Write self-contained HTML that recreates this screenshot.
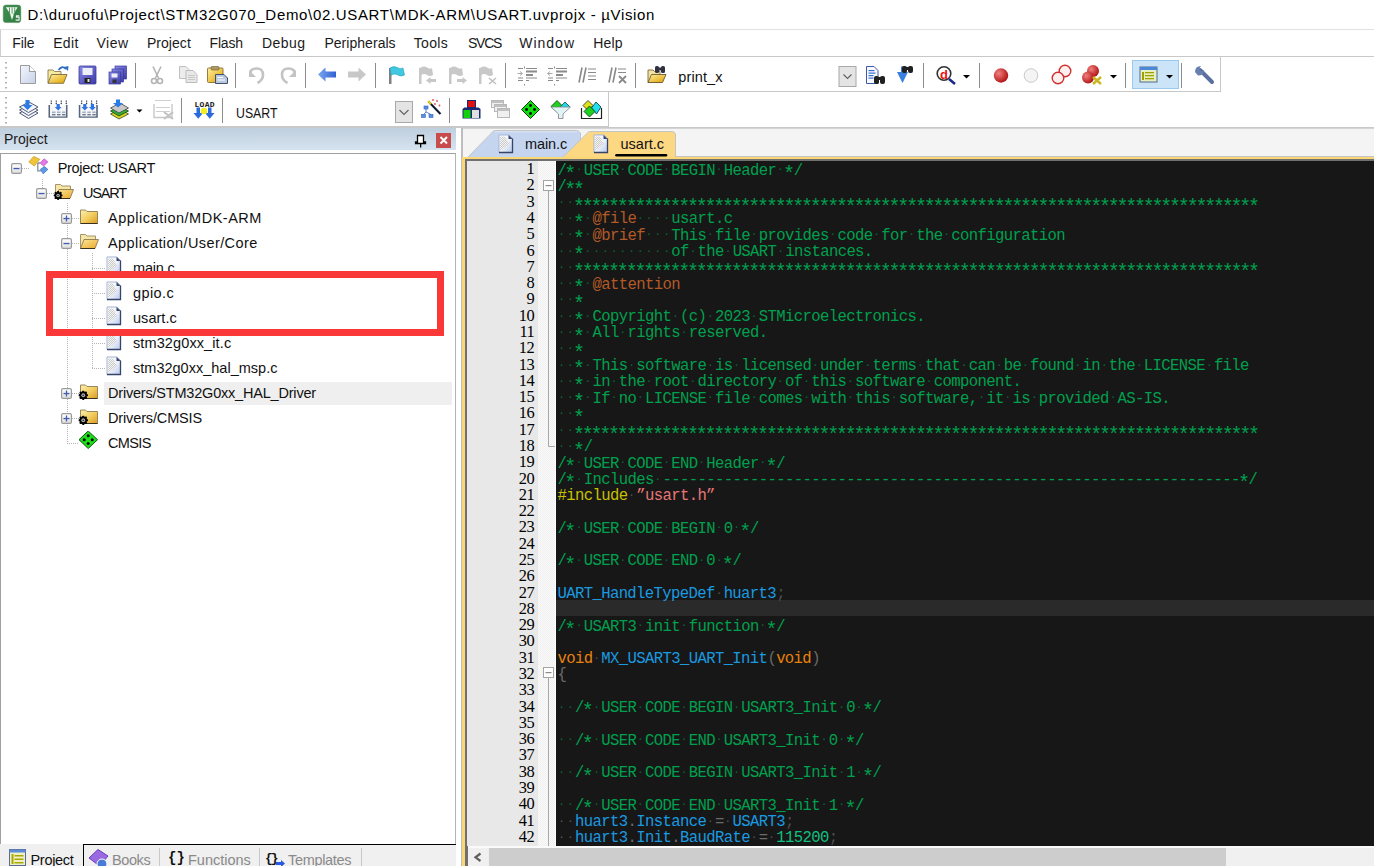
<!DOCTYPE html>
<html><head><meta charset="utf-8"><title>uVision</title>
<style>
html,body{margin:0;padding:0;}
body{width:1374px;height:866px;overflow:hidden;position:relative;background:#fff;font-family:"Liberation Sans",sans-serif;color:#000;}
.a{position:absolute;}
#title{left:27.5px;top:4.5px;font-size:15px;letter-spacing:0.67px;white-space:nowrap;line-height:20px;}
#menu{left:0;top:29px;width:1374px;height:27px;border-top:1px solid #e2e2e2;border-left:1px solid #d0d0d0;}
#menu span{position:absolute;top:4px;font-size:14px;line-height:18px;color:#1a1a1a;}
.hl{left:0;width:1374px;height:1px;background:#c8c8c8;}
.tb{left:0;border-right:1px solid #c8c8c8;border-bottom:1px solid #c8c8c8;background:#fff;}
.grip{left:5px;width:2px;border-left:2px dotted #b8b8b8;}
.sep{width:1px;background:#8a8a8a;}
#ptitle{left:0;top:128px;width:456px;height:22px;background:linear-gradient(#c0cfdd,#d5e3f1);}
#ptitle .t{left:4px;top:2px;font-size:14px;line-height:18px;color:#1a1a1a;}
#pclose{left:436px;top:133px;width:15px;height:15px;background:#c94c4c;}
#pbox{left:0;top:153px;width:454px;height:690px;border:1px solid #a0a0a0;border-bottom:1px solid #000;border-right:1px solid #b4b4b4;background:#fff;}
#ptabs{left:0;top:844px;width:456px;height:22px;background:#f0f0f0;}
#tabstrip{left:463px;top:128px;width:911px;height:29px;background:#f4f4f4;}
#vline{left:461px;top:128px;width:2px;height:738px;background:#bdbdbd;}
#yframe{left:462px;top:157px;width:912px;height:709px;background:#fbd675;}
#dframe{left:465px;top:159px;width:909px;height:707px;background:#707070;}
#gutter{left:467px;top:161px;width:71px;height:685px;background:#e8e8e8;}
#fold{left:538px;top:161px;width:18px;height:685px;background-color:#fbfbfb;background-image:linear-gradient(45deg,#efefef 25%,transparent 25%,transparent 75%,#efefef 75%),linear-gradient(45deg,#efefef 25%,transparent 25%,transparent 75%,#efefef 75%);background-size:2px 2px;background-position:0 0,1px 1px;}
#code{left:556px;top:161px;width:818px;height:685px;background:#171717;overflow:hidden;}
#curline{left:0;top:438.7px;width:818px;height:16.2px;background:#2a2a2a;}
.ln{position:absolute;left:1.4px;height:16.24px;line-height:16.24px;font-family:"Liberation Mono",monospace;font-size:15.6px;letter-spacing:-0.61px;white-space:pre;}
.nm_{position:absolute;right:4px;height:16.24px;line-height:16.24px;font-family:"Liberation Serif",serif;font-size:16.4px;letter-spacing:-0.6px;color:#000;text-align:right;width:60px;}
.cm{color:#00a04e;}
.dg{color:#0a6a36;font-size:11px;letter-spacing:2.15px;line-height:0;position:relative;left:0.8px;top:-2.5px;}
.dd{color:#555;font-size:11px;letter-spacing:2.15px;line-height:0;position:relative;left:0.8px;top:-2.5px;}
.tg{color:#b45a28;}
.pp{color:#c8c000;}
.st{color:#e87676;}
.id{color:#1a9ae0;}
.kw{color:#e8820c;}
.op{color:#6a6a6a;}
.nm{color:#10c080;}
#hscroll{left:467.5px;top:846px;width:907px;height:18px;background:#f0f0f0;border-top:2px solid #fafafa;}
#hthumb{left:21.5px;top:0;width:736.8px;height:18px;background:#cdcdcd;}
.vd{width:1px;background-image:linear-gradient(#b4b4b4 50%,transparent 50%);background-size:1px 2px;}
.hd{height:1px;background-image:linear-gradient(90deg,#b4b4b4 50%,transparent 50%);background-size:2px 1px;}
.tt{font-size:14.5px;line-height:20px;white-space:nowrap;color:#111;}
.ast{font-size:20px;letter-spacing:-3.25px;position:relative;top:5.4px;left:-1.9px;margin-right:0;line-height:0;}
#foldmk{left:538px;top:161px;}
.sc{color:#4e4e4e;}

</style></head>
<body>
<svg width="0" height="0" style="position:absolute">
<defs>
<linearGradient id="gExp" x1="0" y1="0" x2="0" y2="1"><stop offset="0" stop-color="#ffffff"/><stop offset="1" stop-color="#dedede"/></linearGradient>
<linearGradient id="gFold" x1="0" y1="0" x2="1" y2="1"><stop offset="0" stop-color="#fbeeb0"/><stop offset="0.5" stop-color="#f3cf62"/><stop offset="1" stop-color="#d99a22"/></linearGradient>
<linearGradient id="gFoldF" x1="0" y1="0" x2="1" y2="1"><stop offset="0" stop-color="#fde79a"/><stop offset="1" stop-color="#e8a828"/></linearGradient>
<linearGradient id="gFile" x1="0" y1="0" x2="1" y2="1"><stop offset="0" stop-color="#ffffff"/><stop offset="0.5" stop-color="#f0f3fa"/><stop offset="1" stop-color="#b8c8ec"/></linearGradient>
<pattern id="pChk" width="2" height="2" patternUnits="userSpaceOnUse"><rect width="2" height="2" fill="#f4f4f4"/><rect width="1" height="1" fill="#cacaca"/><rect x="1" y="1" width="1" height="1" fill="#cacaca"/></pattern>
<symbol id="exm" viewBox="0 0 11 11"><rect x="0.6" y="0.6" width="9.8" height="9.8" rx="1.5" fill="url(#gExp)" stroke="#9a9a9a" stroke-width="1.2"/><rect x="2.5" y="4.9" width="6" height="1.3" fill="#3f5db0"/></symbol>
<symbol id="exp" viewBox="0 0 11 11"><rect x="0.6" y="0.6" width="9.8" height="9.8" rx="1.5" fill="url(#gExp)" stroke="#9a9a9a" stroke-width="1.2"/><rect x="2.5" y="4.9" width="6" height="1.3" fill="#3f5db0"/><rect x="4.85" y="2.5" width="1.3" height="6" fill="#3f5db0"/></symbol>
<symbol id="proj" viewBox="0 0 22 22"><path d="M9.8,7 L9.8,14.9 L12.9,14.9 M9.8,7 L12,7" fill="none" stroke="#7d8fa8" stroke-width="1.3"/><path d="M0.8,5.9 L5.7,0.4 L11.8,3.3 L6.3,10 Z" fill="#efc43a" stroke="#c89818" stroke-width="0.7"/><path d="M12.1,7.1 L16.1,2.8 L19.9,5.9 L15.5,10 Z" fill="#e878e8" stroke="#b84cb8" stroke-width="0.7"/><path d="M12.3,13.4 L16.4,10.6 L19.9,13.4 L15.2,17.8 Z" fill="#5a9ae6" stroke="#3a70c0" stroke-width="0.7"/></symbol>
<symbol id="fclosed" viewBox="0 0 22 22"><path d="M2.5,4 L7.5,4 L9,5.5 L19.5,5.5 L19.5,17.5 L2.5,17.5 Z" fill="url(#gFold)" stroke="#8f7a50" stroke-width="0.9"/><path d="M2.5,17.5 L19.5,17.5" stroke="#3a3020" stroke-width="1"/></symbol>
<symbol id="fopen" viewBox="0 0 22 22"><path d="M2.5,3.5 L7.5,3.5 L9,5 L17.5,5 L17.5,8 L2.5,17.5 Z" fill="#f6e6a6" stroke="#9a8a60" stroke-width="0.9"/><path d="M2.5,17.5 L6,8.5 L20.5,8.5 L17,17.5 Z" fill="url(#gFoldF)" stroke="#8f7a50" stroke-width="0.9"/><path d="M2.5,17.5 L17,17.5" stroke="#3a3020" stroke-width="1"/></symbol>
<symbol id="gear" viewBox="0 0 10 10"><g fill="#000"><circle cx="5" cy="5" r="3.6"/><circle cx="5" cy="1.2" r="1.3"/><circle cx="5" cy="8.8" r="1.3"/><circle cx="1.2" cy="5" r="1.3"/><circle cx="8.8" cy="5" r="1.3"/><circle cx="2.3" cy="2.3" r="1.3"/><circle cx="7.7" cy="2.3" r="1.3"/><circle cx="2.3" cy="7.7" r="1.3"/><circle cx="7.7" cy="7.7" r="1.3"/></g><circle cx="5" cy="5" r="2" fill="#b0b0b0"/><circle cx="5" cy="5" r="0.9" fill="#333"/></symbol>
<symbol id="fopen_g" viewBox="0 0 22 22"><use href="#fopen"/><svg x="0.6" y="9.8" width="9" height="9.3" viewBox="0 0 10 10"><use href="#gear"/></svg></symbol>
<symbol id="fclosed_g" viewBox="0 0 22 22"><use href="#fclosed"/><svg x="0.5" y="9.5" width="9.5" height="9.5" viewBox="0 0 10 10"><use href="#gear"/></svg></symbol>
<symbol id="file" viewBox="0 0 22 22"><path d="M2,1 L12,1 L15.5,4.5 L15.5,18.5 L2,18.5 Z" fill="url(#gFile)" stroke="#a4b4d4" stroke-width="1"/><path d="M3.2,2.5 L8,2.5 L11.8,9.8 L3.2,17.2 Z" fill="url(#pChk)"/><path d="M15.5,4.5 L15.5,18.5 L2,18.5" fill="none" stroke="#34446a" stroke-width="1.3"/><path d="M11.5,1 L11.5,5 L15.5,5 Z" fill="#34446a"/></symbol>
<symbol id="diamond" viewBox="0 0 22 22"><path d="M10.2,0 L19.5,8.7 L10.2,17.5 L1,8.7 Z" fill="#19e019" stroke="#0a5a0a" stroke-width="1"/><g fill="#000"><circle cx="10.2" cy="4.8" r="1.5"/><circle cx="10.2" cy="12.6" r="1.5"/><circle cx="6.2" cy="8.7" r="1.5"/><circle cx="14.2" cy="8.7" r="1.5"/></g></symbol>
</defs>
</svg>

<div class="a" id="title">D:\duruofu\Project\STM32G070_Demo\02.USART\MDK-ARM\USART.uvprojx - µVision</div>
<svg class="a" style="left:2px;top:4px" width="21" height="21" viewBox="2 4 21 21">
<defs><linearGradient id="gV5" x1="0" y1="0" x2="1" y2="1"><stop offset="0" stop-color="#3f8f4f"/><stop offset="1" stop-color="#2f7a40"/></linearGradient></defs>
<rect x="3.2" y="5" width="17.6" height="17.6" rx="2.8" fill="url(#gV5)" stroke="#5a8a64" stroke-width="0.5"/>
<path d="M5.8,7.2 L17.6,7.2 L12,16.5 Z" fill="#f2f7f2"/>
<g fill="#5a9a68"><rect x="9" y="7.6" width="1" height="6"/><rect x="11.6" y="7.6" width="1" height="6"/><rect x="14.2" y="7.6" width="1" height="5"/></g>
<path d="M10.2,14.5 L13.8,14.5 L12,20 Z" fill="#f2f7f2"/>
<path d="M19.3,15.2 L16,15.2 L15.8,17.8 L18.6,17.8 L18.6,19.5 L15.6,19.5 L15.6,20.8 L19.6,20.8 L19.6,16.6 L17.2,16.6 L17.3,16.2 L19.3,16.2 Z" fill="#f2f7f2"/>
</svg>
<div class="a" id="menu">
<span style="left:11.2px;letter-spacing:-0.11px">File</span><span style="left:52.2px;letter-spacing:0.32px">Edit</span><span style="left:95.5px;letter-spacing:0.50px">View</span><span style="left:145.9px;letter-spacing:0.06px">Project</span><span style="left:208.5px;letter-spacing:-0.15px">Flash</span><span style="left:260.9px;letter-spacing:0.49px">Debug</span><span style="left:323.4px;letter-spacing:0.04px">Peripherals</span><span style="left:412.8px;letter-spacing:0.32px">Tools</span><span style="left:467.1px;letter-spacing:-1.31px">SVCS</span><span style="left:518.3px;letter-spacing:0.98px">Window</span><span style="left:592.2px;letter-spacing:0.20px">Help</span>
</div>
<div class="a hl" style="top:56px;height:1px;"></div>
<div class="a tb" style="top:57px;width:1220px;height:34px;"></div>
<div class="a tb" style="top:92px;width:608px;height:34px;"></div>
<div class="a hl" style="top:127px;"></div>
<svg class="a" style="left:0;top:0" width="1374" height="130" viewBox="0 0 1374 130">
<defs>
<linearGradient id="tgDoc" x1="0" y1="0" x2="1" y2="1"><stop offset="0" stop-color="#f4f6fc"/><stop offset="1" stop-color="#c6d2ea"/></linearGradient>
<linearGradient id="tgFlop" x1="0" y1="0" x2="1" y2="1"><stop offset="0" stop-color="#8a8ae8"/><stop offset="1" stop-color="#3a3aa8"/></linearGradient>
<linearGradient id="tgGold" x1="0" y1="0" x2="1" y2="1"><stop offset="0" stop-color="#fff0a0"/><stop offset="1" stop-color="#e0a000"/></linearGradient>
<linearGradient id="tgBlueArr" x1="0" y1="0" x2="1" y2="0"><stop offset="0" stop-color="#7aa8f0"/><stop offset="1" stop-color="#3060d0"/></linearGradient>
<linearGradient id="tgGray" x1="0" y1="0" x2="0" y2="1"><stop offset="0" stop-color="#e2e2e2"/><stop offset="1" stop-color="#bdbdbd"/></linearGradient>
</defs>
<!-- grips -->
<g fill="#b0b0b0"><rect x="5" y="62" width="2" height="1.5"/><rect x="5" y="67" width="2" height="1.5"/><rect x="5" y="72" width="2" height="1.5"/><rect x="5" y="77" width="2" height="1.5"/><rect x="5" y="82" width="2" height="1.5"/><rect x="5" y="87" width="2" height="1.5"/>
<rect x="5" y="97" width="2" height="1.5"/><rect x="5" y="102" width="2" height="1.5"/><rect x="5" y="107" width="2" height="1.5"/><rect x="5" y="112" width="2" height="1.5"/><rect x="5" y="117" width="2" height="1.5"/><rect x="5" y="122" width="2" height="1.5"/></g>
<!-- separators tb1 -->
<g fill="#8c8c8c"><rect x="135" y="63" width="1" height="25"/><rect x="235" y="63" width="1" height="25"/><rect x="305" y="63" width="1" height="25"/><rect x="375" y="63" width="1" height="25"/><rect x="505" y="63" width="1" height="25"/><rect x="635" y="63" width="1" height="25"/><rect x="923" y="63" width="1" height="25"/><rect x="979" y="63" width="1" height="25"/><rect x="1125" y="63" width="1" height="25"/><rect x="1181" y="63" width="1" height="25"/></g>
<!-- new -->
<path d="M20.5,65.5 L29.5,65.5 L35.5,71.5 L35.5,83.5 L20.5,83.5 Z" fill="url(#tgDoc)" stroke="#9c9c9c"/>
<path d="M29.5,65.5 L29.5,71.5 L35.5,71.5" fill="#fff" stroke="#9c9c9c"/>
<!-- open -->
<path d="M48,70 L53,70 L54.5,71.5 L61,71.5 L61,74 L48,83 Z" fill="#f7e9a0" stroke="#8a7a50" stroke-width="0.9"/>
<path d="M48,83.3 L51.5,74.5 L67,74.5 L63.5,83.3 Z" fill="url(#tgGold)" stroke="#7a6a40" stroke-width="0.9"/>
<path d="M58.5,70 Q62,65 66,69" fill="none" stroke="#3070c0" stroke-width="1.8"/><path d="M64,67 L68,71 L68.5,66 Z" fill="#3070c0"/>
<!-- save -->
<rect x="79" y="66" width="17" height="18" rx="1" fill="url(#tgFlop)" stroke="#3a3a98" stroke-width="0.8"/>
<rect x="82.5" y="68" width="10" height="7" fill="#eceef8"/>
<rect x="84.5" y="78" width="6" height="5" fill="#222"/><rect x="87.5" y="79" width="2" height="3" fill="#ddd"/>
<!-- save all -->
<rect x="115" y="66" width="11.5" height="13" fill="url(#tgFlop)" stroke="#3a3a98" stroke-width="0.7"/>
<rect x="112" y="69" width="11.5" height="13" fill="url(#tgFlop)" stroke="#3a3a98" stroke-width="0.7"/>
<rect x="109" y="72" width="11.5" height="12" fill="url(#tgFlop)" stroke="#3a3a98" stroke-width="0.7"/>
<rect x="111.5" y="73.5" width="6" height="4" fill="#eceef8"/><rect x="112.5" y="79.5" width="4" height="3.5" fill="#333"/>
<!-- cut -->
<g fill="none" stroke="#b4b4b4" stroke-width="1.6"><path d="M153,66.5 L158.5,78"/><path d="M161,66.5 L155.5,78"/><circle cx="154" cy="81" r="2.5"/><circle cx="160" cy="81" r="2.5"/></g>
<!-- copy -->
<path d="M179.5,66.5 L186,66.5 L189,69.5 L189,78.5 L179.5,78.5 Z" fill="#ececec" stroke="#c0c0c0"/>
<path d="M186,70.5 L193,70.5 L197,74.5 L197,82.5 L186,82.5 Z" fill="#e8e8e8" stroke="#bcbcbc"/>
<g stroke="#c8c8c8"><path d="M188,75.5 H195"/><path d="M188,77.5 H195"/><path d="M188,79.5 H195"/></g>
<!-- paste -->
<rect x="207.5" y="68" width="15.5" height="14.5" rx="1" fill="url(#tgGold)" stroke="#8a7030" stroke-width="0.9"/>
<rect x="211" y="66.5" width="8" height="3.5" rx="1" fill="#b09860" stroke="#6a5a30" stroke-width="0.6"/>
<path d="M215.5,74.5 L224,74.5 L227.5,78 L227.5,83.5 L215.5,83.5 Z" fill="#b8c8e0" stroke="#40506a" stroke-width="1"/>
<g stroke="#fff"><path d="M217.5,77.5 H223"/><path d="M217.5,80 H225"/></g>
<!-- undo / redo -->
<path d="M251,75 Q249,69 256,68.5 Q263,68 263,75 Q263,80 257.5,83" fill="none" stroke="#c4c4c4" stroke-width="2.6"/>
<path d="M249,70 L249,77 L256,77 Z" fill="#c4c4c4"/>
<path d="M294,75 Q296,69 289,68.5 Q282,68 282,75 Q282,80 287.5,83" fill="none" stroke="#c4c4c4" stroke-width="2.6"/>
<path d="M296,70 L296,77 L289,77 Z" fill="#c4c4c4"/>
<!-- back / forward -->
<path d="M318,74.5 L325.5,67.5 L325.5,71.5 L336,71.5 L336,77.5 L325.5,77.5 L325.5,81.5 Z" fill="url(#tgBlueArr)"/>
<path d="M366,74.5 L358.5,67.5 L358.5,71.5 L348,71.5 L348,77.5 L358.5,77.5 L358.5,81.5 Z" fill="#c8c8c8"/>
<!-- bookmark flags -->
<rect x="389" y="68" width="2.5" height="16" fill="#808080"/>
<path d="M390,68 Q394,65.5 397,67.5 Q400,69.5 403,68 L404.5,75 Q401,77 398,75 Q395,73 391,75 Z" fill="#40c8e0" stroke="#20a0c0" stroke-width="0.6"/>
<g fill="#c8c8c8">
<rect x="419" y="68" width="2.5" height="16"/><path d="M420,68 Q424,65.5 427,67.5 Q430,69.5 432,68 L433,75 Q430,77 427,75 Q424,73 421,75 Z"/><path d="M426,80.5 L430.5,77 L430.5,79 L436,79 L436,82 L430.5,82 L430.5,84 Z"/>
<rect x="449" y="68" width="2.5" height="16"/><path d="M450,68 Q454,65.5 457,67.5 Q460,69.5 462,68 L463,75 Q460,77 457,75 Q454,73 451,75 Z"/><path d="M467,80.5 L462.5,77 L462.5,79 L457,79 L457,82 L462.5,82 L462.5,84 Z"/>
<rect x="479" y="68" width="2.5" height="16"/><path d="M480,68 Q484,65.5 487,67.5 Q490,69.5 492,68 L493,75 Q490,77 487,75 Q484,73 481,75 Z"/>
</g>
<path d="M489,78 L496,84 M496,78 L489,84" stroke="#c0c0c0" stroke-width="1.6"/>
<!-- indent / unindent -->
<g fill="#8a8a8a">
<rect x="524" y="66.5" width="1" height="2"/><rect x="524" y="84" width="1" height="1.5"/>
<rect x="518" y="68" width="5" height="1"/><rect x="526" y="68" width="11" height="1"/>
<rect x="526" y="70.5" width="11" height="2"/><rect x="526" y="74" width="7" height="2"/>
<rect x="518" y="77.5" width="5" height="1"/><rect x="526" y="77.5" width="11" height="1"/>
<rect x="518" y="80" width="5" height="1"/><rect x="526" y="80" width="3" height="1"/>
<rect x="554" y="66.5" width="1" height="2"/><rect x="554" y="84" width="1" height="1.5"/>
<rect x="548" y="68" width="5" height="1"/><rect x="556" y="68" width="11" height="1"/>
<rect x="556" y="70.5" width="11" height="2"/><rect x="556" y="74" width="7" height="2"/>
<rect x="548" y="77.5" width="5" height="1"/><rect x="556" y="77.5" width="11" height="1"/>
<rect x="548" y="80" width="5" height="1"/><rect x="556" y="80" width="3" height="1"/>
</g>
<path d="M517.5,73.5 L522,73.5 M520,71.5 L522.5,73.5 L520,75.5" stroke="#a8a8a8" fill="none"/>
<path d="M552.5,73.5 L548,73.5 M550,71.5 L547.5,73.5 L550,75.5" stroke="#a8a8a8" fill="none"/>
<!-- comment / uncomment -->
<g stroke="#8a8a8a" stroke-width="1.6"><path d="M582,67.5 L579,82.5"/><path d="M586,67.5 L583,82.5"/><path d="M612,67.5 L609,82.5"/><path d="M616,67.5 L613,82.5"/></g>
<g fill="#8a8a8a"><rect x="588" y="68.5" width="8" height="1"/><rect x="588" y="72" width="8" height="1"/><rect x="588" y="75.5" width="8" height="1"/><rect x="588" y="79" width="8" height="1"/>
<rect x="618" y="68.5" width="8" height="1"/><rect x="618" y="72" width="8" height="1"/></g>
<path d="M619,76 L626,83 M626,76 L619,83" stroke="#8a8a8a" stroke-width="1.8"/>
<!-- find in files -->
<path d="M648,70 L653,70 L654.5,71.5 L660,71.5 L660,82.5 L648,82.5 Z" fill="#f3e3a0" stroke="#7a6a40" stroke-width="0.9"/>
<path d="M648,82.5 L651.5,74.5 L666,74.5 L662.5,82.5 Z" fill="url(#tgGold)" stroke="#6a5a30" stroke-width="0.9"/>
<g fill="#303040"><rect x="655" y="66" width="4" height="7" rx="1.5"/><rect x="661" y="66" width="4" height="7" rx="1.5"/><rect x="658" y="67.5" width="4" height="3"/></g>
<!-- dropdown btn -->
<rect x="839" y="66.5" width="17" height="20" fill="#e4e4e4" stroke="#a8a8a8"/>
<path d="M843.5,74.5 L847.5,78.5 L851.5,74.5" fill="none" stroke="#606060" stroke-width="1.1"/>
<!-- find doc -->
<path d="M866.5,66.5 L874,66.5 L878,70.5 L878,83.5 L866.5,83.5 Z" fill="#f8f8ff" stroke="#3a5aa8" stroke-width="1"/>
<g fill="#3a70d0"><rect x="868.5" y="70" width="6" height="1.2"/><rect x="868.5" y="72.5" width="7" height="1.2"/><rect x="868.5" y="75" width="5" height="1.2"/><rect x="868.5" y="77.5" width="5" height="1.2"/></g>
<g fill="#202020"><rect x="874" y="76" width="5" height="8" rx="2"/><rect x="880" y="76" width="5" height="8" rx="2"/><rect x="877" y="77" width="4" height="3"/></g>
<!-- incremental find -->
<path d="M897,72 L901,72 L901,66.5 L904,66.5 L904,72 L908,72 L902.5,83 Z" fill="#3a80e0"/>
<g fill="#202020"><rect x="902" y="66" width="5" height="7" rx="2"/><rect x="908" y="66" width="5" height="7" rx="2"/><rect x="905" y="67" width="4" height="3"/></g>
<!-- debug -->
<circle cx="944" cy="73.5" r="6.8" fill="#fff" stroke="#303030" stroke-width="1.6"/>
<path d="M949,79 L955,84" stroke="#1a2a8a" stroke-width="2.6"/>
<text x="940" y="78.5" font-family="Liberation Sans" font-weight="bold" font-size="13" fill="#ee1010">d</text>
<path d="M963,75 L970,75 L966.5,78.5 Z" fill="#000"/>
<!-- breakpoints -->
<defs><radialGradient id="tgRed" cx="0.35" cy="0.35" r="0.7"><stop offset="0" stop-color="#f08080"/><stop offset="1" stop-color="#b01010"/></radialGradient></defs>
<circle cx="1001" cy="75.5" r="7.2" fill="url(#tgRed)"/>
<circle cx="1031" cy="75.5" r="6.8" fill="#f4f4f4" stroke="#c8c8c8" stroke-width="1"/>
<circle cx="1065" cy="71" r="5.8" fill="#fff0f0" stroke="#d03030" stroke-width="1.4"/>
<circle cx="1058" cy="78" r="5.8" fill="#fff0f0" stroke="#d03030" stroke-width="1.4"/>
<circle cx="1093" cy="71" r="6" fill="url(#tgRed)"/>
<circle cx="1088" cy="77.5" r="6" fill="url(#tgRed)"/>
<path d="M1093,77 L1101,84 M1101,77 L1093,84" stroke="#c8b820" stroke-width="2.4"/>
<path d="M1110,75 L1117,75 L1113.5,78.5 Z" fill="#000"/>
<!-- window highlight -->
<rect x="1132.5" y="60.5" width="46" height="28" fill="#cce4f7" stroke="#99c9ef"/>
<rect x="1140" y="67" width="17" height="15" fill="#e8f0c0" stroke="#506890"/>
<rect x="1140" y="67" width="17" height="3" fill="#4a88d8"/>
<g fill="#a0a000"><rect x="1142" y="72" width="2" height="8"/><rect x="1145" y="72" width="9" height="1.3"/><rect x="1145" y="75" width="9" height="1.3"/><rect x="1145" y="78" width="9" height="1.3"/></g>
<path d="M1166,75 L1173,75 L1169.5,78.5 Z" fill="#000"/>
<!-- wrench -->
<path d="M1200,70 L1212,82" stroke="#5a70a0" stroke-width="4" stroke-linecap="round"/>
<path d="M1195,72 Q1195,66 1201,66 L1199,69 L1201,71.5 L1204,70 Q1204,75.5 1198,75.5 Z" fill="#6880b0"/>
</svg>

<svg class="a" style="left:0;top:0" width="620" height="130" viewBox="0 0 620 130">
<defs>
<linearGradient id="t2Gray" x1="0" y1="0" x2="0" y2="1"><stop offset="0" stop-color="#f8f8f8"/><stop offset="1" stop-color="#c8c8c8"/></linearGradient>
</defs>
<g fill="#8c8c8c"><rect x="181" y="98" width="1" height="25"/><rect x="222" y="98" width="1" height="25"/><rect x="449" y="98" width="1" height="25"/></g>
<!-- translate: stacked pages with blue arrow -->
<g stroke="#3a4a6a" stroke-width="0.9" fill="#f4f4f8">
<path d="M19.5,113 L29,108 L38,113 L28.5,118.5 Z"/>
<path d="M19.5,110 L29,105 L38,110 L28.5,115.5 Z"/>
<path d="M19.5,107 L29,102 L38,107 L28.5,112.5 Z"/>
</g>
<path d="M25.5,100 L29.5,100 L29.5,105 L32.5,105 L27.5,110 L22.5,105 L25.5,105 Z" fill="#2a7ae8"/>
<!-- build -->
<path d="M49.3,105 L49.3,117 L66.7,117 L66.7,105" fill="none" stroke="#56657e" stroke-width="1.6"/>
<rect x="50.5" y="106" width="15" height="10.3" fill="#f4f6fa"/>
<rect x="50.7" y="100.4" width="1.2" height="2" fill="#606a7a"/><circle cx="51.3" cy="103.5" r="0.8" fill="#404a5a"/>
<rect x="55.7" y="100.4" width="1.2" height="2" fill="#606a7a"/><circle cx="56.3" cy="103.5" r="0.8" fill="#404a5a"/>
<rect x="60.7" y="100.4" width="1.2" height="2" fill="#606a7a"/><circle cx="61.3" cy="103.5" r="0.8" fill="#404a5a"/>
<rect x="65.7" y="100.4" width="1.2" height="2" fill="#606a7a"/><circle cx="66.3" cy="103.5" r="0.8" fill="#404a5a"/>
<rect x="52.0" y="111.5" width="3.5" height="1.6" fill="#a8b0c0"/><rect x="52.0" y="114" width="3.5" height="1.4" fill="#707a8a"/>
<rect x="57.0" y="111.5" width="3.5" height="1.6" fill="#a8b0c0"/><rect x="57.0" y="114" width="3.5" height="1.4" fill="#707a8a"/>
<rect x="62.0" y="111.5" width="3.5" height="1.6" fill="#a8b0c0"/><rect x="62.0" y="114" width="3.5" height="1.4" fill="#707a8a"/>
<path d="M56.6,104 L59.800000000000004,104 L59.800000000000004,107 L61.6,107 L58.2,110.6 L54.800000000000004,107 L56.6,107 Z" fill="#2f74e4"/>
<!-- rebuild -->
<path d="M79.6,105 L79.6,117 L97.0,117 L97.0,105" fill="none" stroke="#56657e" stroke-width="1.6"/>
<rect x="80.8" y="106" width="15" height="10.3" fill="#f4f6fa"/>
<rect x="81.0" y="100.4" width="1.2" height="2" fill="#606a7a"/><circle cx="81.6" cy="103.5" r="0.8" fill="#404a5a"/>
<rect x="86.0" y="100.4" width="1.2" height="2" fill="#606a7a"/><circle cx="86.6" cy="103.5" r="0.8" fill="#404a5a"/>
<rect x="91.0" y="100.4" width="1.2" height="2" fill="#606a7a"/><circle cx="91.6" cy="103.5" r="0.8" fill="#404a5a"/>
<rect x="96.0" y="100.4" width="1.2" height="2" fill="#606a7a"/><circle cx="96.6" cy="103.5" r="0.8" fill="#404a5a"/>
<rect x="82.3" y="111.5" width="3.5" height="1.6" fill="#a8b0c0"/><rect x="82.3" y="114" width="3.5" height="1.4" fill="#707a8a"/>
<rect x="87.3" y="111.5" width="3.5" height="1.6" fill="#a8b0c0"/><rect x="87.3" y="114" width="3.5" height="1.4" fill="#707a8a"/>
<rect x="92.3" y="111.5" width="3.5" height="1.6" fill="#a8b0c0"/><rect x="92.3" y="114" width="3.5" height="1.4" fill="#707a8a"/>
<path d="M83.2,104 L86.39999999999999,104 L86.39999999999999,107 L88.2,107 L84.8,110.6 L81.39999999999999,107 L83.2,107 Z" fill="#2f74e4"/>
<path d="M90.8,104 L93.99999999999999,104 L93.99999999999999,107 L95.8,107 L92.39999999999999,110.6 L88.99999999999999,107 L90.8,107 Z" fill="#2f74e4"/>
<!-- batch build -->
<path d="M110.5,114 L120,109 L128.5,114 L119,119 Z" fill="#d8d820" stroke="#404020" stroke-width="0.8"/>
<path d="M110.5,111 L120,106 L128.5,111 L119,116 Z" fill="#30b030" stroke="#204020" stroke-width="0.8"/>
<path d="M110.5,108 L120,103 L128.5,108 L119,113 Z" fill="#c8c8c8" stroke="#404040" stroke-width="0.8"/>
<path d="M116,99.5 L120,99.5 L120,103 L123,103 L118,107.5 L113,103 L116,103 Z" fill="#2a7ae8"/>
<path d="M136.5,109.5 L142.5,109.5 L139.5,112.5 Z" fill="#000"/>
<!-- stop build (disabled) -->
<path d="M154,104 L154,117.5 L172,117.5 L172,104" fill="none" stroke="#c8c8c8" stroke-width="1.4"/>
<g fill="#d0d0d0"><rect x="155" y="100" width="16" height="1"/><rect x="156" y="107" width="14" height="1"/><rect x="156" y="111" width="14" height="1"/></g>
<path d="M164,112 L173,119 M173,112 L164,119" stroke="#c4c4c4" stroke-width="2.2"/>
<!-- LOAD -->
<text x="194.5" y="106.5" font-family="Liberation Mono" font-weight="bold" font-size="8" fill="#202020" textLength="20">LOAD</text>
<path d="M196.5,107.5 L200,107.5 L200,113 L203,113 L198.2,118.8 L193.5,113 L196.5,113 Z" fill="#2a6ae0"/>
<path d="M208,107.5 L211.5,107.5 L211.5,113 L214.5,113 L209.8,118.8 L205,113 L208,113 Z" fill="#2a6ae0"/>
<circle cx="204" cy="111" r="3.3" fill="#f0f020"/>
<!-- dropdown -->
<rect x="395.5" y="101.5" width="17" height="21" fill="#e4e4e4" stroke="#a8a8a8"/>
<path d="M399.5,110 L404,114.5 L408.5,110" fill="none" stroke="#606060" stroke-width="1.1"/>
<!-- magic wand -->
<g fill="#5a90e0" stroke="#3060c0" stroke-width="0.6"><rect x="424" y="106" width="4" height="3"/><rect x="421.5" y="114.5" width="4" height="3"/><rect x="429" y="114.5" width="4" height="3"/></g>
<path d="M426,109 L426,112 L423.5,114.5 M426,112 L431,114.5" fill="none" stroke="#3060c0" stroke-width="0.8"/>
<path d="M428.5,101.5 L440.5,114" stroke="#101830" stroke-width="2"/>
<path d="M428,101 L431,104" stroke="#e8d020" stroke-width="2"/>
<g fill="#e05050"><circle cx="433" cy="100" r="0.9"/><circle cx="437" cy="101" r="0.9"/><circle cx="435" cy="104" r="0.9"/><circle cx="439.5" cy="105.5" r="0.9"/></g>
<!-- pack boxes -->
<rect x="467.5" y="100.5" width="8" height="7" fill="#e01010" stroke="#1a2a70" stroke-width="1"/>
<path d="M462.5,118.5 L462.5,109 L464.5,107.5 L478.5,107.5 L480.5,109 L480.5,118.5 Z" fill="#1a2a70"/>
<rect x="463.5" y="110" width="7" height="8" fill="#10d010"/>
<rect x="472" y="110" width="7" height="8" fill="#e0e0e0"/>
<!-- windows (disabled) -->
<g fill="#f0f0f0" stroke="#b8b8b8" stroke-width="1"><rect x="491.5" y="100.5" width="12" height="7"/><rect x="494.5" y="104.5" width="12" height="7"/><rect x="497.5" y="108.5" width="12" height="9"/></g>
<g fill="#c0c0c0"><rect x="492" y="101" width="11" height="2"/><rect x="495" y="105" width="11" height="2"/><rect x="498" y="109" width="11" height="2"/></g>
<!-- green diamond -->
<path d="M530.5,100.5 L539.5,109.5 L530.5,118.5 L521.5,109.5 Z" fill="#10e010" stroke="#083808" stroke-width="1"/>
<g fill="#000"><circle cx="530.5" cy="105.5" r="1.4"/><circle cx="530.5" cy="113.5" r="1.4"/><circle cx="526.5" cy="109.5" r="1.4"/><circle cx="534.5" cy="109.5" r="1.4"/></g>
<!-- funnel -->
<path d="M557,100.5 L563,106.5 L557,112 L551,106.5 Z" fill="#20d020" stroke="#084008" stroke-width="0.8"/>
<path d="M565,102 L569.5,106.5 L565,111 L560.5,106.5 Z" fill="#20d8e8" stroke="#084048" stroke-width="0.8"/>
<path d="M551,107 L570.5,107 L563,114 L563,118.5 L558.5,118.5 L558.5,114 Z" fill="#e0f4f8" stroke="#808080" stroke-width="0.8"/>
<!-- multi -->
<path d="M581.5,108 L581.5,118.5 L601.5,118.5 L601.5,108" fill="none" stroke="#202020" stroke-width="1.2"/>
<path d="M588,100.5 L593,105.5 L588,110.5 L583,105.5 Z" fill="#e0e020" stroke="#303000" stroke-width="0.8"/>
<path d="M596,102 L601,107 L596.5,114 L591.5,108 Z" fill="#20e0f0" stroke="#003040" stroke-width="0.8"/>
<path d="M589.5,106 L595,111.5 L589.5,117 L584,111.5 Z" fill="#20d020" stroke="#083008" stroke-width="0.8"/>
</svg>

<div class="a" style="left:678.3px;top:68px;font-size:14.5px;line-height:18px;color:#111;letter-spacing:0.1px;">print_x</div>
<div class="a" style="left:236px;top:103.5px;font-size:15px;line-height:18px;color:#111;transform:scaleX(0.82);transform-origin:0 0;">USART</div>
<div class="a" id="ptitle"><div class="a t">Project</div></div>
<div class="a" id="pclose"></div>
<svg class="a" style="left:410px;top:128px" width="46" height="22" viewBox="410 128 46 22">
<path d="M440.5,137 L447,143.5 M447,137 L440.5,143.5" stroke="#fff" stroke-width="2"/>
<path d="M417.5,135.5 L423.5,135.5 L423.5,142 L425.5,142 L425.5,143.5 L415.5,143.5 L415.5,142 L417.5,142 Z" fill="#fff" stroke="#000" stroke-width="1.3"/>
<rect x="420" y="143.5" width="1.3" height="4" fill="#000"/>
</svg>
<div class="a" id="pbox"></div>
<div class="a" style="left:104px;top:382px;width:348px;height:23px;background:#efefef;"></div>
<div class="a vd" style="left:41.5px;top:179px;height:9px;"></div>
<div class="a vd" style="left:66.5px;top:203px;height:241px;"></div>
<div class="a vd" style="left:91.5px;top:253px;height:116px;"></div>
<div class="a hd" style="left:22px;top:168px;width:7px;"></div>
<div class="a hd" style="left:47px;top:193px;width:7px;"></div>
<div class="a hd" style="left:72px;top:218px;width:8px;"></div>
<div class="a hd" style="left:72px;top:243px;width:8px;"></div>
<div class="a hd" style="left:72px;top:393px;width:8px;"></div>
<div class="a hd" style="left:72px;top:418px;width:8px;"></div>
<div class="a hd" style="left:67px;top:443px;width:12px;"></div>
<div class="a hd" style="left:92px;top:268px;width:14px;"></div>
<div class="a hd" style="left:92px;top:293px;width:14px;"></div>
<div class="a hd" style="left:92px;top:318px;width:14px;"></div>
<div class="a hd" style="left:92px;top:343px;width:14px;"></div>
<div class="a hd" style="left:92px;top:368px;width:14px;"></div>
<svg class="a" style="left:10.8px;top:162.5px" width="11" height="11"><use href="#exm"/></svg>
<svg class="a" style="left:28px;top:156px" width="22" height="22"><use href="#proj"/></svg>
<div class="a tt" style="left:57.8px;top:158px;letter-spacing:-0.35px">Project: USART</div>
<svg class="a" style="left:35.8px;top:187.5px" width="11" height="11"><use href="#exm"/></svg>
<svg class="a" style="left:53px;top:181px" width="22" height="22"><use href="#fopen_g"/></svg>
<div class="a tt" style="left:83px;top:183px;letter-spacing:-1.18px">USART</div>
<svg class="a" style="left:60.8px;top:212.5px" width="11" height="11"><use href="#exp"/></svg>
<svg class="a" style="left:78px;top:206px" width="22" height="22"><use href="#fclosed"/></svg>
<div class="a tt" style="left:108px;top:208px;letter-spacing:0.51px">Application/MDK-ARM</div>
<svg class="a" style="left:60.8px;top:237.5px" width="11" height="11"><use href="#exm"/></svg>
<svg class="a" style="left:78px;top:231px" width="22" height="22"><use href="#fopen"/></svg>
<div class="a tt" style="left:108px;top:233px;letter-spacing:0.41px">Application/User/Core</div>
<svg class="a" style="left:105px;top:256px" width="22" height="22"><use href="#file"/></svg>
<div class="a tt" style="left:133px;top:258px;letter-spacing:-0.20px">main.c</div>
<svg class="a" style="left:105px;top:281px" width="22" height="22"><use href="#file"/></svg>
<div class="a tt" style="left:133px;top:283px;letter-spacing:0.42px">gpio.c</div>
<svg class="a" style="left:105px;top:306px" width="22" height="22"><use href="#file"/></svg>
<div class="a tt" style="left:133px;top:308px;letter-spacing:0.04px">usart.c</div>
<svg class="a" style="left:105px;top:331px" width="22" height="22"><use href="#file"/></svg>
<div class="a tt" style="left:133px;top:333px;letter-spacing:0.11px">stm32g0xx_it.c</div>
<svg class="a" style="left:105px;top:356px" width="22" height="22"><use href="#file"/></svg>
<div class="a tt" style="left:133px;top:358px;letter-spacing:0.01px">stm32g0xx_hal_msp.c</div>
<svg class="a" style="left:60.8px;top:387.5px" width="11" height="11"><use href="#exp"/></svg>
<svg class="a" style="left:78px;top:381px" width="22" height="22"><use href="#fclosed_g"/></svg>
<div class="a tt" style="left:108px;top:383px;letter-spacing:-0.20px">Drivers/STM32G0xx_HAL_Driver</div>
<svg class="a" style="left:60.8px;top:412.5px" width="11" height="11"><use href="#exp"/></svg>
<svg class="a" style="left:78px;top:406px" width="22" height="22"><use href="#fclosed_g"/></svg>
<div class="a tt" style="left:108px;top:408px;letter-spacing:-0.14px">Drivers/CMSIS</div>
<svg class="a" style="left:78px;top:431px" width="22" height="22"><use href="#diamond"/></svg>
<div class="a tt" style="left:108px;top:433px;letter-spacing:-0.64px">CMSIS</div>
<div class="a" style="left:46px;top:271px;width:384px;height:51px;border:7px solid #fb3838;"></div>
<div class="a" id="ptabs"></div>
<div class="a" style="left:83px;top:844px;width:373px;height:1px;background:#000;"></div>
<div class="a" style="left:83px;top:844px;width:1px;height:22px;background:#000;"></div>
<svg class="a" style="left:0;top:840px" width="460" height="26" viewBox="0 840 460 26">
<rect x="9.5" y="849.5" width="16" height="16" fill="#eef0c8" stroke="#5a6a90"/>
<rect x="9.5" y="849.5" width="16" height="3" fill="#5a8ad8"/>
<g fill="#a8a800"><rect x="11.5" y="854" width="2" height="10"/><rect x="14.5" y="855" width="9" height="1.5"/><rect x="14.5" y="858.5" width="9" height="1.5"/><rect x="14.5" y="862" width="9" height="1.5"/></g>
<path d="M89,858 L98,849.5 L108,856 L99.5,866 Z" fill="#9a6ae0" stroke="#6a3ac0" stroke-width="1"/>
<circle cx="102" cy="864" r="5" fill="#4a7ad8" stroke="#fff" stroke-width="1"/>
<rect x="159" y="848" width="1" height="18" fill="#c8c8c8"/>
<rect x="259" y="848" width="1" height="18" fill="#c8c8c8"/>
<rect x="361" y="848" width="1" height="18" fill="#c8c8c8"/>
<text x="168" y="862" font-family="Liberation Mono" font-weight="bold" font-size="14" fill="#111">{}</text>
<text x="265" y="862" font-family="Liberation Mono" font-weight="bold" font-size="13" fill="#111" letter-spacing="-2">{}</text>
<path d="M276,862 L281,862 L281,860 L285,863.5 L281,867 L281,865 L276,865 Z" fill="#2a5ae0"/>
</svg>
<div class="a" style="left:30.5px;top:850.5px;font-size:14.5px;line-height:18px;color:#111;letter-spacing:-0.3px;">Project</div>
<div class="a" style="left:112px;top:850.5px;font-size:14.5px;line-height:18px;color:#8a8a8a;letter-spacing:-0.4px;">Books</div>
<div class="a" style="left:188px;top:850.5px;font-size:14.5px;line-height:18px;color:#8a8a8a;letter-spacing:0px;">Functions</div>
<div class="a" style="left:288px;top:850.5px;font-size:14.5px;line-height:18px;color:#8a8a8a;letter-spacing:-0.33px;">Templates</div>

<div class="a" id="vline"></div>
<div class="a" id="tabstrip"></div>
<div class="a" style="left:463px;top:128px;width:911px;height:1px;background:#d4d4d4;"></div>
<div class="a" style="left:675px;top:156px;width:699px;height:1px;background:#c4c4c4;"></div>
<svg class="a" style="left:0;top:0" width="1374" height="162" viewBox="0 0 1374 162">
<path d="M467.5,157.5 L493.5,131 Q494.5,130.5 496,130.5 L576.5,130.5 Q578.5,130.5 580.5,133 L580.5,157.5 Z" fill="#c5d5f0" stroke="#c4c4c4" stroke-width="1"/>
<path d="M495,131.8 L577,131.8" stroke="#dde6f6" stroke-width="1"/>
<path d="M562.5,157.5 L588.5,132 Q589.5,131.5 591,131.5 L672,131.5 Q674.5,131.5 675.5,134 L675.5,157.5 Z" fill="#fdd882" stroke="#c4c4c4" stroke-width="1"/>
<path d="M616.5,155.2 L666,155.2" stroke="#000" stroke-width="2.6" stroke-linecap="round"/>
<svg x="497" y="134" width="22" height="22" viewBox="0 0 22 22"><use href="#file"/></svg>
<svg x="592" y="134" width="22" height="22" viewBox="0 0 22 22"><use href="#file"/></svg>
</svg>
<div class="a" style="left:525px;top:135px;font-size:14.5px;line-height:18px;color:#111;letter-spacing:-0.1px;">main.c</div>
<div class="a" style="left:620.5px;top:135px;font-size:14.5px;line-height:18px;color:#111;letter-spacing:0px;">usart.c</div>

<div class="a" id="yframe"></div>
<div class="a" id="dframe"></div>
<div class="a" id="gutter"><div style="position:absolute;left:0;top:0;width:71px;"><div class="nm_" style="top:0.20px">1</div>
<div class="nm_" style="top:16.48px">2</div>
<div class="nm_" style="top:32.77px">3</div>
<div class="nm_" style="top:49.05px">4</div>
<div class="nm_" style="top:65.34px">5</div>
<div class="nm_" style="top:81.62px">6</div>
<div class="nm_" style="top:97.91px">7</div>
<div class="nm_" style="top:114.20px">8</div>
<div class="nm_" style="top:130.48px">9</div>
<div class="nm_" style="top:146.76px">10</div>
<div class="nm_" style="top:163.05px">11</div>
<div class="nm_" style="top:179.34px">12</div>
<div class="nm_" style="top:195.62px">13</div>
<div class="nm_" style="top:211.91px">14</div>
<div class="nm_" style="top:228.19px">15</div>
<div class="nm_" style="top:244.47px">16</div>
<div class="nm_" style="top:260.76px">17</div>
<div class="nm_" style="top:277.05px">18</div>
<div class="nm_" style="top:293.33px">19</div>
<div class="nm_" style="top:309.61px">20</div>
<div class="nm_" style="top:325.90px">21</div>
<div class="nm_" style="top:342.19px">22</div>
<div class="nm_" style="top:358.47px">23</div>
<div class="nm_" style="top:374.75px">24</div>
<div class="nm_" style="top:391.04px">25</div>
<div class="nm_" style="top:407.32px">26</div>
<div class="nm_" style="top:423.61px">27</div>
<div class="nm_" style="top:439.89px">28</div>
<div class="nm_" style="top:456.18px">29</div>
<div class="nm_" style="top:472.46px">30</div>
<div class="nm_" style="top:488.75px">31</div>
<div class="nm_" style="top:505.03px">32</div>
<div class="nm_" style="top:521.32px">33</div>
<div class="nm_" style="top:537.61px">34</div>
<div class="nm_" style="top:553.89px">35</div>
<div class="nm_" style="top:570.18px">36</div>
<div class="nm_" style="top:586.46px">37</div>
<div class="nm_" style="top:602.75px">38</div>
<div class="nm_" style="top:619.03px">39</div>
<div class="nm_" style="top:635.32px">40</div>
<div class="nm_" style="top:651.60px">41</div>
<div class="nm_" style="top:667.89px">42</div></div></div>
<div class="a" id="fold"></div>
<svg class="a" id="foldmk" width="18" height="685" viewBox="538 161 18 685">
<rect x="555" y="161" width="1" height="685" fill="#fff"/>
<rect x="543.5" y="180.5" width="10" height="10" fill="#fff" stroke="#a4a4a4"/><rect x="545.5" y="185" width="6" height="1.2" fill="#8a8a8a"/>
<path d="M548.5,191 L548.5,446.5 L555,446.5" fill="none" stroke="#a8a8a8"/>
<rect x="543.5" y="667.5" width="10" height="10" fill="#fff" stroke="#a4a4a4"/><rect x="545.5" y="672" width="6" height="1.2" fill="#8a8a8a"/>
<path d="M548.5,678 L548.5,846" fill="none" stroke="#a8a8a8"/>
</svg>
<div class="a" id="code"><div class="a" id="curline"></div><div class="ln" style="top:1.60px"><span class="cm">/</span><span class="cm ast">*</span><span class="dg">·</span><span class="cm">USER</span><span class="dg">·</span><span class="cm">CODE</span><span class="dg">·</span><span class="cm">BEGIN</span><span class="dg">·</span><span class="cm">Header</span><span class="dg">·</span><span class="cm ast">*</span><span class="cm">/</span></div>
<div class="ln" style="top:17.88px"><span class="cm">/</span><span class="cm ast">*</span><span class="cm ast">*</span></div>
<div class="ln" style="top:34.17px"><span class="dg">·</span><span class="dg">·</span><span class="cm ast">*</span><span class="cm ast">*</span><span class="cm ast">*</span><span class="cm ast">*</span><span class="cm ast">*</span><span class="cm ast">*</span><span class="cm ast">*</span><span class="cm ast">*</span><span class="cm ast">*</span><span class="cm ast">*</span><span class="cm ast">*</span><span class="cm ast">*</span><span class="cm ast">*</span><span class="cm ast">*</span><span class="cm ast">*</span><span class="cm ast">*</span><span class="cm ast">*</span><span class="cm ast">*</span><span class="cm ast">*</span><span class="cm ast">*</span><span class="cm ast">*</span><span class="cm ast">*</span><span class="cm ast">*</span><span class="cm ast">*</span><span class="cm ast">*</span><span class="cm ast">*</span><span class="cm ast">*</span><span class="cm ast">*</span><span class="cm ast">*</span><span class="cm ast">*</span><span class="cm ast">*</span><span class="cm ast">*</span><span class="cm ast">*</span><span class="cm ast">*</span><span class="cm ast">*</span><span class="cm ast">*</span><span class="cm ast">*</span><span class="cm ast">*</span><span class="cm ast">*</span><span class="cm ast">*</span><span class="cm ast">*</span><span class="cm ast">*</span><span class="cm ast">*</span><span class="cm ast">*</span><span class="cm ast">*</span><span class="cm ast">*</span><span class="cm ast">*</span><span class="cm ast">*</span><span class="cm ast">*</span><span class="cm ast">*</span><span class="cm ast">*</span><span class="cm ast">*</span><span class="cm ast">*</span><span class="cm ast">*</span><span class="cm ast">*</span><span class="cm ast">*</span><span class="cm ast">*</span><span class="cm ast">*</span><span class="cm ast">*</span><span class="cm ast">*</span><span class="cm ast">*</span><span class="cm ast">*</span><span class="cm ast">*</span><span class="cm ast">*</span><span class="cm ast">*</span><span class="cm ast">*</span><span class="cm ast">*</span><span class="cm ast">*</span><span class="cm ast">*</span><span class="cm ast">*</span><span class="cm ast">*</span><span class="cm ast">*</span><span class="cm ast">*</span><span class="cm ast">*</span><span class="cm ast">*</span><span class="cm ast">*</span><span class="cm ast">*</span><span class="cm ast">*</span></div>
<div class="ln" style="top:50.45px"><span class="dg">·</span><span class="dg">·</span><span class="cm ast">*</span><span class="dg">·</span><span class="tg">@file</span><span class="dg">·</span><span class="dg">·</span><span class="dg">·</span><span class="dg">·</span><span class="cm">usart.c</span></div>
<div class="ln" style="top:66.74px"><span class="dg">·</span><span class="dg">·</span><span class="cm ast">*</span><span class="dg">·</span><span class="tg">@brief</span><span class="dg">·</span><span class="dg">·</span><span class="dg">·</span><span class="cm">This</span><span class="dg">·</span><span class="cm">file</span><span class="dg">·</span><span class="cm">provides</span><span class="dg">·</span><span class="cm">code</span><span class="dg">·</span><span class="cm">for</span><span class="dg">·</span><span class="cm">the</span><span class="dg">·</span><span class="cm">configuration</span></div>
<div class="ln" style="top:83.02px"><span class="dg">·</span><span class="dg">·</span><span class="cm ast">*</span><span class="dg">·</span><span class="dg">·</span><span class="dg">·</span><span class="dg">·</span><span class="dg">·</span><span class="dg">·</span><span class="dg">·</span><span class="dg">·</span><span class="dg">·</span><span class="dg">·</span><span class="cm">of</span><span class="dg">·</span><span class="cm">the</span><span class="dg">·</span><span class="cm">USART</span><span class="dg">·</span><span class="cm">instances.</span></div>
<div class="ln" style="top:99.31px"><span class="dg">·</span><span class="dg">·</span><span class="cm ast">*</span><span class="cm ast">*</span><span class="cm ast">*</span><span class="cm ast">*</span><span class="cm ast">*</span><span class="cm ast">*</span><span class="cm ast">*</span><span class="cm ast">*</span><span class="cm ast">*</span><span class="cm ast">*</span><span class="cm ast">*</span><span class="cm ast">*</span><span class="cm ast">*</span><span class="cm ast">*</span><span class="cm ast">*</span><span class="cm ast">*</span><span class="cm ast">*</span><span class="cm ast">*</span><span class="cm ast">*</span><span class="cm ast">*</span><span class="cm ast">*</span><span class="cm ast">*</span><span class="cm ast">*</span><span class="cm ast">*</span><span class="cm ast">*</span><span class="cm ast">*</span><span class="cm ast">*</span><span class="cm ast">*</span><span class="cm ast">*</span><span class="cm ast">*</span><span class="cm ast">*</span><span class="cm ast">*</span><span class="cm ast">*</span><span class="cm ast">*</span><span class="cm ast">*</span><span class="cm ast">*</span><span class="cm ast">*</span><span class="cm ast">*</span><span class="cm ast">*</span><span class="cm ast">*</span><span class="cm ast">*</span><span class="cm ast">*</span><span class="cm ast">*</span><span class="cm ast">*</span><span class="cm ast">*</span><span class="cm ast">*</span><span class="cm ast">*</span><span class="cm ast">*</span><span class="cm ast">*</span><span class="cm ast">*</span><span class="cm ast">*</span><span class="cm ast">*</span><span class="cm ast">*</span><span class="cm ast">*</span><span class="cm ast">*</span><span class="cm ast">*</span><span class="cm ast">*</span><span class="cm ast">*</span><span class="cm ast">*</span><span class="cm ast">*</span><span class="cm ast">*</span><span class="cm ast">*</span><span class="cm ast">*</span><span class="cm ast">*</span><span class="cm ast">*</span><span class="cm ast">*</span><span class="cm ast">*</span><span class="cm ast">*</span><span class="cm ast">*</span><span class="cm ast">*</span><span class="cm ast">*</span><span class="cm ast">*</span><span class="cm ast">*</span><span class="cm ast">*</span><span class="cm ast">*</span><span class="cm ast">*</span><span class="cm ast">*</span><span class="cm ast">*</span></div>
<div class="ln" style="top:115.60px"><span class="dg">·</span><span class="dg">·</span><span class="cm ast">*</span><span class="dg">·</span><span class="tg">@attention</span></div>
<div class="ln" style="top:131.88px"><span class="dg">·</span><span class="dg">·</span><span class="cm ast">*</span></div>
<div class="ln" style="top:148.16px"><span class="dg">·</span><span class="dg">·</span><span class="cm ast">*</span><span class="dg">·</span><span class="cm">Copyright</span><span class="dg">·</span><span class="cm">(c)</span><span class="dg">·</span><span class="cm">2023</span><span class="dg">·</span><span class="cm">STMicroelectronics.</span></div>
<div class="ln" style="top:164.45px"><span class="dg">·</span><span class="dg">·</span><span class="cm ast">*</span><span class="dg">·</span><span class="cm">All</span><span class="dg">·</span><span class="cm">rights</span><span class="dg">·</span><span class="cm">reserved.</span></div>
<div class="ln" style="top:180.74px"><span class="dg">·</span><span class="dg">·</span><span class="cm ast">*</span></div>
<div class="ln" style="top:197.02px"><span class="dg">·</span><span class="dg">·</span><span class="cm ast">*</span><span class="dg">·</span><span class="cm">This</span><span class="dg">·</span><span class="cm">software</span><span class="dg">·</span><span class="cm">is</span><span class="dg">·</span><span class="cm">licensed</span><span class="dg">·</span><span class="cm">under</span><span class="dg">·</span><span class="cm">terms</span><span class="dg">·</span><span class="cm">that</span><span class="dg">·</span><span class="cm">can</span><span class="dg">·</span><span class="cm">be</span><span class="dg">·</span><span class="cm">found</span><span class="dg">·</span><span class="cm">in</span><span class="dg">·</span><span class="cm">the</span><span class="dg">·</span><span class="cm">LICENSE</span><span class="dg">·</span><span class="cm">file</span></div>
<div class="ln" style="top:213.31px"><span class="dg">·</span><span class="dg">·</span><span class="cm ast">*</span><span class="dg">·</span><span class="cm">in</span><span class="dg">·</span><span class="cm">the</span><span class="dg">·</span><span class="cm">root</span><span class="dg">·</span><span class="cm">directory</span><span class="dg">·</span><span class="cm">of</span><span class="dg">·</span><span class="cm">this</span><span class="dg">·</span><span class="cm">software</span><span class="dg">·</span><span class="cm">component.</span></div>
<div class="ln" style="top:229.59px"><span class="dg">·</span><span class="dg">·</span><span class="cm ast">*</span><span class="dg">·</span><span class="cm">If</span><span class="dg">·</span><span class="cm">no</span><span class="dg">·</span><span class="cm">LICENSE</span><span class="dg">·</span><span class="cm">file</span><span class="dg">·</span><span class="cm">comes</span><span class="dg">·</span><span class="cm">with</span><span class="dg">·</span><span class="cm">this</span><span class="dg">·</span><span class="cm">software,</span><span class="dg">·</span><span class="cm">it</span><span class="dg">·</span><span class="cm">is</span><span class="dg">·</span><span class="cm">provided</span><span class="dg">·</span><span class="cm">AS-IS.</span></div>
<div class="ln" style="top:245.88px"><span class="dg">·</span><span class="dg">·</span><span class="cm ast">*</span></div>
<div class="ln" style="top:262.16px"><span class="dg">·</span><span class="dg">·</span><span class="cm ast">*</span><span class="cm ast">*</span><span class="cm ast">*</span><span class="cm ast">*</span><span class="cm ast">*</span><span class="cm ast">*</span><span class="cm ast">*</span><span class="cm ast">*</span><span class="cm ast">*</span><span class="cm ast">*</span><span class="cm ast">*</span><span class="cm ast">*</span><span class="cm ast">*</span><span class="cm ast">*</span><span class="cm ast">*</span><span class="cm ast">*</span><span class="cm ast">*</span><span class="cm ast">*</span><span class="cm ast">*</span><span class="cm ast">*</span><span class="cm ast">*</span><span class="cm ast">*</span><span class="cm ast">*</span><span class="cm ast">*</span><span class="cm ast">*</span><span class="cm ast">*</span><span class="cm ast">*</span><span class="cm ast">*</span><span class="cm ast">*</span><span class="cm ast">*</span><span class="cm ast">*</span><span class="cm ast">*</span><span class="cm ast">*</span><span class="cm ast">*</span><span class="cm ast">*</span><span class="cm ast">*</span><span class="cm ast">*</span><span class="cm ast">*</span><span class="cm ast">*</span><span class="cm ast">*</span><span class="cm ast">*</span><span class="cm ast">*</span><span class="cm ast">*</span><span class="cm ast">*</span><span class="cm ast">*</span><span class="cm ast">*</span><span class="cm ast">*</span><span class="cm ast">*</span><span class="cm ast">*</span><span class="cm ast">*</span><span class="cm ast">*</span><span class="cm ast">*</span><span class="cm ast">*</span><span class="cm ast">*</span><span class="cm ast">*</span><span class="cm ast">*</span><span class="cm ast">*</span><span class="cm ast">*</span><span class="cm ast">*</span><span class="cm ast">*</span><span class="cm ast">*</span><span class="cm ast">*</span><span class="cm ast">*</span><span class="cm ast">*</span><span class="cm ast">*</span><span class="cm ast">*</span><span class="cm ast">*</span><span class="cm ast">*</span><span class="cm ast">*</span><span class="cm ast">*</span><span class="cm ast">*</span><span class="cm ast">*</span><span class="cm ast">*</span><span class="cm ast">*</span><span class="cm ast">*</span><span class="cm ast">*</span><span class="cm ast">*</span><span class="cm ast">*</span></div>
<div class="ln" style="top:278.45px"><span class="dg">·</span><span class="dg">·</span><span class="cm ast">*</span><span class="cm">/</span></div>
<div class="ln" style="top:294.73px"><span class="cm">/</span><span class="cm ast">*</span><span class="dg">·</span><span class="cm">USER</span><span class="dg">·</span><span class="cm">CODE</span><span class="dg">·</span><span class="cm">END</span><span class="dg">·</span><span class="cm">Header</span><span class="dg">·</span><span class="cm ast">*</span><span class="cm">/</span></div>
<div class="ln" style="top:311.01px"><span class="cm">/</span><span class="cm ast">*</span><span class="dg">·</span><span class="cm">Includes</span><span class="dg">·</span><span class="cm">------------------------------------------------------------------</span><span class="cm ast">*</span><span class="cm">/</span></div>
<div class="ln" style="top:327.30px"><span class="pp">#include</span><span class="dd">·</span><span class="st">”usart.h”</span></div>
<div class="ln" style="top:343.59px"></div>
<div class="ln" style="top:359.87px"><span class="cm">/</span><span class="cm ast">*</span><span class="dg">·</span><span class="cm">USER</span><span class="dg">·</span><span class="cm">CODE</span><span class="dg">·</span><span class="cm">BEGIN</span><span class="dg">·</span><span class="cm">0</span><span class="dg">·</span><span class="cm ast">*</span><span class="cm">/</span></div>
<div class="ln" style="top:376.15px"></div>
<div class="ln" style="top:392.44px"><span class="cm">/</span><span class="cm ast">*</span><span class="dg">·</span><span class="cm">USER</span><span class="dg">·</span><span class="cm">CODE</span><span class="dg">·</span><span class="cm">END</span><span class="dg">·</span><span class="cm">0</span><span class="dg">·</span><span class="cm ast">*</span><span class="cm">/</span></div>
<div class="ln" style="top:408.73px"></div>
<div class="ln" style="top:425.01px"><span class="id">UART_HandleTypeDef</span><span class="dd">·</span><span class="id">huart3</span><span class="sc">;</span></div>
<div class="ln" style="top:441.29px"></div>
<div class="ln" style="top:457.58px"><span class="cm">/</span><span class="cm ast">*</span><span class="dg">·</span><span class="cm">USART3</span><span class="dg">·</span><span class="cm">init</span><span class="dg">·</span><span class="cm">function</span><span class="dg">·</span><span class="cm ast">*</span><span class="cm">/</span></div>
<div class="ln" style="top:473.87px"></div>
<div class="ln" style="top:490.15px"><span class="kw">void</span><span class="dd">·</span><span class="id">MX_USART3_UART_Init</span><span class="op">(</span><span class="kw">void</span><span class="op">)</span></div>
<div class="ln" style="top:506.43px"><span class="op">{</span></div>
<div class="ln" style="top:522.72px"></div>
<div class="ln" style="top:539.00px"><span class="dg">·</span><span class="dg">·</span><span class="cm">/</span><span class="cm ast">*</span><span class="dg">·</span><span class="cm">USER</span><span class="dg">·</span><span class="cm">CODE</span><span class="dg">·</span><span class="cm">BEGIN</span><span class="dg">·</span><span class="cm">USART3_Init</span><span class="dg">·</span><span class="cm">0</span><span class="dg">·</span><span class="cm ast">*</span><span class="cm">/</span></div>
<div class="ln" style="top:555.29px"></div>
<div class="ln" style="top:571.58px"><span class="dg">·</span><span class="dg">·</span><span class="cm">/</span><span class="cm ast">*</span><span class="dg">·</span><span class="cm">USER</span><span class="dg">·</span><span class="cm">CODE</span><span class="dg">·</span><span class="cm">END</span><span class="dg">·</span><span class="cm">USART3_Init</span><span class="dg">·</span><span class="cm">0</span><span class="dg">·</span><span class="cm ast">*</span><span class="cm">/</span></div>
<div class="ln" style="top:587.86px"></div>
<div class="ln" style="top:604.14px"><span class="dg">·</span><span class="dg">·</span><span class="cm">/</span><span class="cm ast">*</span><span class="dg">·</span><span class="cm">USER</span><span class="dg">·</span><span class="cm">CODE</span><span class="dg">·</span><span class="cm">BEGIN</span><span class="dg">·</span><span class="cm">USART3_Init</span><span class="dg">·</span><span class="cm">1</span><span class="dg">·</span><span class="cm ast">*</span><span class="cm">/</span></div>
<div class="ln" style="top:620.43px"></div>
<div class="ln" style="top:636.72px"><span class="dg">·</span><span class="dg">·</span><span class="cm">/</span><span class="cm ast">*</span><span class="dg">·</span><span class="cm">USER</span><span class="dg">·</span><span class="cm">CODE</span><span class="dg">·</span><span class="cm">END</span><span class="dg">·</span><span class="cm">USART3_Init</span><span class="dg">·</span><span class="cm">1</span><span class="dg">·</span><span class="cm ast">*</span><span class="cm">/</span></div>
<div class="ln" style="top:653.00px"><span class="dd">·</span><span class="dd">·</span><span class="id">huart3</span><span class="op">.</span><span class="id">Instance</span><span class="dd">·</span><span class="op">=</span><span class="dd">·</span><span class="id">USART3</span><span class="sc">;</span></div>
<div class="ln" style="top:669.29px"><span class="dd">·</span><span class="dd">·</span><span class="id">huart3</span><span class="op">.</span><span class="id">Init</span><span class="op">.</span><span class="id">BaudRate</span><span class="dd">·</span><span class="op">=</span><span class="dd">·</span><span class="nm">115200</span><span class="sc">;</span></div></div>
<div class="a" id="hscroll"><div class="a" id="hthumb"></div></div>
<svg class="a" style="left:467px;top:846px" width="30" height="20" viewBox="467 846 30 20"><path d="M480.5,853.5 L475.5,857.3 L480.5,861" fill="none" stroke="#606060" stroke-width="2.2"/></svg>

</body></html>
